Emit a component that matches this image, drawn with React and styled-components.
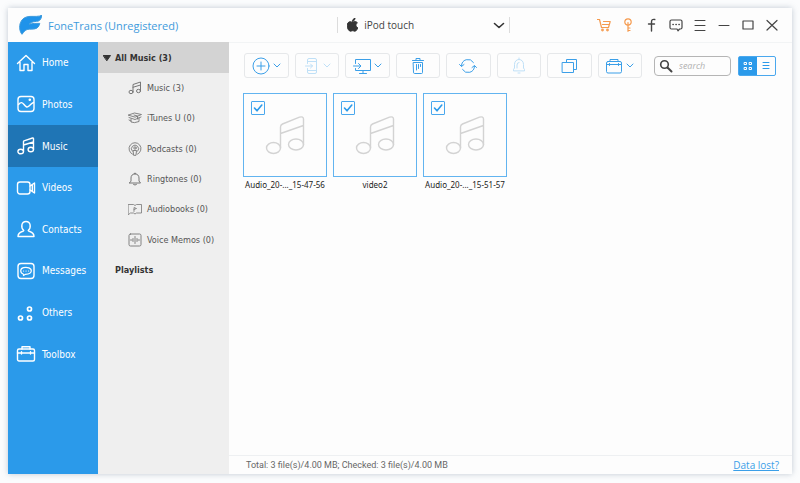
import React, { useState } from 'react';
import styled, { createGlobalStyle } from 'styled-components';

const GlobalStyle = createGlobalStyle`
    * {
        box-sizing: border-box;
    }
    body {
        margin: 0;
        background-color: #fbfcfd;
        font-family: 'Open Sans', 'Noto Sans', sans-serif;
    }
    button, input, select {
        font-family: inherit;
        margin: 0;
    }
    button {
        padding: 0;
        border: 0;
        background: none;
        cursor: pointer;
    }
`

function Icon({ w = 20, h = 20, stroke = 1.4, children, ...rest }) {
    return (
        <svg
            width={w}
            height={h}
            viewBox={`0 0 ${w} ${h}`}
            fill="none"
            stroke="currentColor"
            strokeWidth={stroke}
            strokeLinecap="round"
            strokeLinejoin="round"
            aria-hidden="true"
            {...rest}
        >
            {children}
        </svg>
    )
}

const LogoIcon = () => (
    <Icon w={23} h={20} fill="#1f93ea" stroke="none">
        <path d="M22.800 0.300C22.500 3 21.500 5.200 19.500 6C17 6.700 12.500 6.200 10.200 9.200C13 8.300 17 8.400 20.800 8.400C20 11.500 18.500 13.500 15.500 13.900C12 14.300 8.500 13.600 6.200 15.500C5 16.500 4.200 17.800 3 19.300C0.500 16.500 0 11.500 1.500 7.500C3.200 3.500 6.500 1.500 11 1.400C15 1.200 20 2 22.800 0.300Z" />
    </Icon>
)

const AppleIcon = () => (
    <Icon w={11} h={14} fill="currentColor" stroke="none">
        <path d="M7.800 0.500C7.900 2 6.800 3.300 5.400 3.400C5.200 2 6.400 0.700 7.800 0.500ZM5.500 4.300C6.200 4.300 7 3.600 8.100 3.600C9.200 3.700 9.900 4.100 10.400 4.800C8.300 6.100 8.600 8.800 10.800 9.700C10.200 11.300 9.200 13.200 7.900 13.200C7.100 13.200 6.700 12.700 5.700 12.700C4.700 12.700 4.300 13.200 3.500 13.200C1.800 13.200 0.200 10.200 0.200 7.700C0.200 5.200 1.600 3.700 3.200 3.700C4.200 3.700 4.900 4.300 5.500 4.300Z" />
    </Icon>
)

const HomeIcon = () => (
    <Icon>
        <path d="M1.500 10.500L10 2.500L18.500 10.500M4 9.500V17.500H8V11.500H12V17.500H16V9.500" />
    </Icon>
)
const PhotosIcon = () => (
    <Icon>
        <rect x="2" y="2.500" width="16" height="15" rx="3" />
        <path d="M2.500 10.500C5 7.500 6.500 8.500 8 10.500S11 14 13 12S16 9 17.500 8.500" />
        <circle cx="13.800" cy="5.800" r="0.600" />
    </Icon>
)
const MusicIcon = () => (
    <Icon>
        <path d="M7.500 15V5.500Q7.500 5 8 4.800L16.500 2Q17.500 1.800 17.500 2.800V13.300M7.500 9L17.500 6" />
        <ellipse cx="4.700" cy="15.500" rx="2.800" ry="2.300" />
        <ellipse cx="14.800" cy="13.500" rx="2.700" ry="2.300" />
    </Icon>
)
const VideosIcon = () => (
    <Icon>
        <rect x="1.500" y="4" width="12.500" height="12" rx="2.500" />
        <path d="M14 8L18.500 5V15L14 12M16.300 6.800V13.200" />
    </Icon>
)
const ContactsIcon = () => (
    <Icon>
        <path d="M7.800 11.500C4.500 8.500 5.300 2.500 10 2.500S15.500 8.500 12.200 11.500C12.200 13 18 12 18 17.500H2C2 12 7.800 13 7.800 11.500Z" />
    </Icon>
)
const MessagesIcon = () => (
    <Icon>
        <rect x="2" y="2.500" width="16" height="15" rx="3" />
        <path d="M7.500 13.200C3.800 12 3.800 7.500 7.500 6.600S15.500 7 15.300 10S11.500 13.200 9.500 13.300L7.500 14.500ZM7.500 10H7.600M10 10H10.100M12.500 10H12.600" strokeWidth="1.200" />
    </Icon>
)
const OthersIcon = () => (
    <Icon stroke={1.7}>
        <circle cx="13.500" cy="6" r="2" />
        <circle cx="4.500" cy="15" r="2" />
        <circle cx="13.500" cy="15" r="2" />
    </Icon>
)
const ToolboxIcon = () => (
    <Icon>
        <rect x="1.500" y="5" width="17" height="12" rx="1.500" />
        <path d="M6 5V2.800H14V5M1.500 9H18.500M5.500 7.800V10M14.500 7.800V10" />
    </Icon>
)

const ItunesIcon = () => (
    <Icon w={14} h={14} stroke={0.9}>
        <path d="M0.500 4L6.500 2L13.500 3.500L7.500 6ZM1 6.500L7 8.500L13 6M3 8V11Q6 12.500 11 10.500V7M6 4L9.500 5V8M1 9L3 10" />
    </Icon>
)
const NoteSmallIcon = () => (
    <Icon w={14} h={14} stroke={1}>
        <path d="M5 10.500V3.500L12.500 1V9.500M5 6.300L12.500 4" />
        <ellipse cx="3" cy="11" rx="2" ry="1.700" />
        <ellipse cx="10.500" cy="10" rx="2" ry="1.700" />
    </Icon>
)
const PodcastIcon = () => (
    <Icon w={14} h={14} stroke={0.9}>
        <path d="M4.500 12.200A6 6 0 1 1 9.500 12.200M4.300 9.200A3.600 3.600 0 1 1 9.700 9.200M5.500 8.500H8.500L8 13.300H6Z" />
        <circle cx="7" cy="6" r="1.200" />
    </Icon>
)
const BellIcon = () => (
    <Icon w={14} h={14} stroke={1}>
        <path d="M1.500 11H12.500L11 9V6C11 3.500 9.500 2 7 2S3 3.500 3 6V9ZM6 1.500Q7 0.300 8 1.500M5.500 12.500Q7 13.800 8.500 12.500" />
    </Icon>
)
const BookIcon = () => (
    <Icon w={14} h={14} stroke={0.8}>
        <path d="M0.500 2.500H5.500L7 3.500L8.500 2.500H13.500V11H8.500L7 12L5.500 11H2.500L0.500 12.500Z" />
        <path d="M6 9.500V5.500L8.500 6.500L6 7.500" />
    </Icon>
)
const MemoIcon = () => (
    <Icon w={14} h={14} stroke={0.9}>
        <rect x="1" y="1" width="12" height="12" rx="1.500" />
        <path d="M2.500 7H4M5 5.500V8.500M7 3.500V10.500M9 5.500V8.500M10 7H11.500" />
    </Icon>
)

const AddIcon = () => (
    <Icon w={18} h={18} stroke={1}>
        <circle cx="9" cy="9" r="8" />
        <path d="M9 5V13M5 9H13" />
    </Icon>
)
const ToDeviceIcon = () => (
    <Icon w={18} h={18} stroke={1}>
        <path d="M5.500 6.500V3Q5.500 1.500 7 1.500H13Q14.500 1.500 14.500 3V15Q14.500 16.500 13 16.500H7Q5.500 16.500 5.500 15V11.500M5.500 4.500H14.500M5.500 13.500H14.500M3.500 9H10.500M8.500 7L10.500 9L8.500 11" />
    </Icon>
)
const ToComputerIcon = () => (
    <Icon w={18} h={18} stroke={1}>
        <path d="M2.500 6.500V2.500H17.500V13.500H2.500V11.500M10 13.500V16M6.500 16.500H13.500M0.500 9H7.500M5.500 6.500L8 9L5.500 11.500" />
    </Icon>
)
const TrashIcon = () => (
    <Icon w={18} h={18} stroke={1}>
        <path d="M3.500 3.500H14.500M7 3V1.500H11V3M4.500 5.500H13.500V15.500Q13.500 16.500 12.500 16.500H5.500Q4.500 16.500 4.500 15.500ZM7.500 7.500V13M9.500 7.500V11.500M11.500 7.500V9.500" />
    </Icon>
)
const RefreshIcon = () => (
    <Icon w={18} h={18} stroke={1}>
        <path d="M2.500 9A6.500 6.500 0 0 1 14.500 5.500M15.500 9A6.500 6.500 0 0 1 3.500 12.500M0.500 7.500L2.500 9.500L5 7.500M13 10.500L15.500 8.500L17.500 10.500" />
    </Icon>
)
const BellSolidIcon = () => (
    <Icon w={18} h={18} stroke={1}>
        <path d="M3.500 13.500V12.500L4.500 11V7.500C4.500 4.500 6.500 2.500 9 2.500S13.500 4.500 13.500 7.500V11L14.500 12.500V13.500ZM9 1V2M8 16H10M7 11V8Q7 5.500 9 5.500" />
    </Icon>
)
const CopyIcon = () => (
    <Icon w={18} h={18} stroke={1}>
        <path d="M6.500 5V2.500H16.500V12.500H13.500" />
        <rect x="2.500" y="5.500" width="11" height="10" />
    </Icon>
)
const CaseIcon = () => (
    <Icon w={18} h={18} stroke={1}>
        <rect x="1.500" y="4.500" width="15" height="11.500" rx="1.500" />
        <path d="M5 4.500V2.500H13V4.500M1.500 7.500H16.500M4.500 6.500V8.500M13.500 6.500V8.500" />
    </Icon>
)
const CaretIcon = () => (
    <Icon w={8} h={5} stroke={1}>
        <path d="M1 1L4 4L7 1" />
    </Icon>
)

const CartIcon = () => (
    <Icon w={14} h={14} stroke={1.2}>
        <path d="M0.500 1.500H2.500L4.500 9.500H11.500L13.200 3.500H6.500M5.500 6.500H12" />
        <circle cx="5.500" cy="12" r="0.800" />
        <circle cx="10.500" cy="12" r="0.800" />
    </Icon>
)
const KeyIcon = () => (
    <Icon w={14} h={14} stroke={1.2}>
        <circle cx="7" cy="4" r="3.200" />
        <path d="M7 4.500V13.300M7 10H9M7 12.500H9" />
    </Icon>
)
const FacebookIcon = () => (
    <Icon w={14} h={14} stroke={1.4}>
        <path d="M9.800 1.500Q6.500 0.800 6.500 4V13M3.500 6H9.500" />
    </Icon>
)
const FeedbackIcon = () => (
    <Icon w={14} h={14} stroke={1.2}>
        <path d="M2.500 2H11.500Q13 2 13 3.500V9.500Q13 11 11.500 11H10.500L9 12.800L8 11H2.500Q1 11 1 9.500V3.500Q1 2 2.500 2Z" />
        <path d="M4 6.500H4.200M7 6.500H7.200M10 6.500H10.200" strokeWidth="1.600" />
    </Icon>
)
const MenuIcon = () => (
    <Icon w={14} h={14} stroke={1}>
        <path d="M2 2.500H12M2 7.500H12M2 12.500H12" />
    </Icon>
)
const MinimizeIcon = () => (
    <Icon w={14} h={14} stroke={1}>
        <path d="M2 7.500H12" />
    </Icon>
)
const MaximizeIcon = () => (
    <Icon w={14} h={14} stroke={1.2}>
        <rect x="2" y="3" width="10" height="8" />
    </Icon>
)
const CloseIcon = () => (
    <Icon w={14} h={14} stroke={1.2}>
        <path d="M2 2.500L12 12M12 2.500L2 12" />
    </Icon>
)
const SearchIcon = () => (
    <Icon w={14} h={14} stroke={1.600}>
        <circle cx="5.500" cy="5.500" r="3.800" />
        <path d="M8.500 8.500L12.500 12.500" strokeWidth="2" />
    </Icon>
)
const GridIcon = () => (
    <Icon w={10} h={10} stroke={1}>
        <path d="M1.500 1.500H3.500V3.500H1.500ZM6.500 1.500H8.500V3.500H6.500ZM1.500 6.500H3.500V8.500H1.500ZM6.500 6.500H8.500V8.500H6.500Z" />
    </Icon>
)
const ListIcon = () => (
    <Icon w={10} h={10} stroke={1}>
        <path d="M2 1.500H8M2 4.500H8M2 7.500H8" />
    </Icon>
)
const ExpandIcon = () => (
    <Icon w={8} h={6} fill="currentColor" stroke="none">
        <path d="M0.500 0.500H7.500L4 5.500Z" />
    </Icon>
)
const BigNoteIcon = () => (
    <Icon w={40} h={40} stroke={1.400}>
        <path d="M15.500 33V12Q15.500 10 17.500 9L34.500 2.200Q38.500 1 38.500 4V30M15.500 18.500L38.500 10.500" />
        <ellipse cx="8.500" cy="33" rx="7" ry="5.500" />
        <ellipse cx="31" cy="29.500" rx="7.500" ry="5.500" />
    </Icon>
)

const sections = [
    { name: 'Home', icon: <HomeIcon /> },
    { name: 'Photos', icon: <PhotosIcon /> },
    { name: 'Music', icon: <MusicIcon /> },
    { name: 'Videos', icon: <VideosIcon /> },
    { name: 'Contacts', icon: <ContactsIcon /> },
    { name: 'Messages', icon: <MessagesIcon /> },
    { name: 'Others', icon: <OthersIcon /> },
    { name: 'Toolbox', icon: <ToolboxIcon /> },
]

const categories = [
    { name: 'Music (3)', icon: <NoteSmallIcon /> },
    { name: 'iTunes U (0)', icon: <ItunesIcon /> },
    { name: 'Podcasts (0)', icon: <PodcastIcon /> },
    { name: 'Ringtones (0)', icon: <BellIcon /> },
    { name: 'Audiobooks (0)', icon: <BookIcon /> },
    { name: 'Voice Memos (0)', icon: <MemoIcon /> },
]

const tools = [
    { name: 'Add', icon: <AddIcon />, caret: true },
    { name: 'Export to device', icon: <ToDeviceIcon />, caret: true, disabled: true },
    { name: 'Export to computer', icon: <ToComputerIcon />, caret: true },
    { name: 'Delete', icon: <TrashIcon /> },
    { name: 'Refresh', icon: <RefreshIcon /> },
    { name: 'Ringtone maker', icon: <BellSolidIcon />, disabled: true },
    { name: 'Duplicates', icon: <CopyIcon /> },
    { name: 'More tools', icon: <CaseIcon />, caret: true },
]

const windowActions = [
    { name: 'Buy', icon: <CartIcon />, color: '#f59a4e' },
    { name: 'Register', icon: <KeyIcon />, color: '#f59a4e' },
    { name: 'Facebook', icon: <FacebookIcon /> },
    { name: 'Feedback', icon: <FeedbackIcon /> },
    { name: 'Menu', icon: <MenuIcon /> },
    { name: 'Minimize', icon: <MinimizeIcon /> },
    { name: 'Maximize', icon: <MaximizeIcon /> },
    { name: 'Close', icon: <CloseIcon /> },
]

const files = ['Audio_20-..._15-47-56', 'video2', 'Audio_20-..._15-51-57']

function TitleBar() {
    return (
        <Header>
            <Brand>
                <LogoIcon />
                FoneTrans (Unregistered)
            </Brand>

            <DeviceBox>
                <AppleIcon />
                <DeviceSelect aria-label="Device" defaultValue="ipod">
                    <option value="ipod">iPod touch</option>
                </DeviceSelect>
                <Icon w={12} h={8} stroke={1.6}>
                    <path d="M1.500 2.500L6 6.500L10.500 2.500" />
                </Icon>
            </DeviceBox>

            <WindowActions>
                {windowActions.map(a => (
                    <WindowButton key={a.name} aria-label={a.name} $color={a.color}>
                        {a.icon}
                    </WindowButton>
                ))}
            </WindowActions>
        </Header>
    )
}

function Toolbar() {
    return (
        <ToolbarRow>
            <ToolGroup>
                {tools.map(t => (
                    <ToolButton key={t.name} aria-label={t.name} disabled={t.disabled}>
                        {t.icon}
                        {t.caret && <CaretIcon />}
                    </ToolButton>
                ))}
            </ToolGroup>

            <SearchBox>
                <SearchIcon />
                <SearchInput type="text" placeholder="search" aria-label="search" />
            </SearchBox>

            <ViewSwitch>
                <ViewButton aria-label="Grid view" $active><GridIcon /></ViewButton>
                <ViewButton aria-label="List view"><ListIcon /></ViewButton>
            </ViewSwitch>
        </ToolbarRow>
    )
}

function FileCard({ name }) {
    const [checked, setChecked] = useState(true)
    return (
        <FileLabel>
            <Thumb>
                <BigNoteIcon />
                <CheckHolder>
                    <CheckInput
                        type="checkbox"
                        checked={checked}
                        onChange={e => setChecked(e.target.checked)}
                    />
                    {checked && (
                        <Icon w={14} h={14} stroke={1.600}>
                            <path d="M3.500 7L6 9.800L10.800 4" />
                        </Icon>
                    )}
                </CheckHolder>
            </Thumb>
            <FileName>{name}</FileName>
        </FileLabel>
    )
}

export default function App() {
    const [section, setSection] = useState('Music')

    return (
        <Page>
            <GlobalStyle />
            <Window>
                <TitleBar />
                <Body>
                    <SideNav>
                        <SideList>
                            {sections.map(s => (
                                <SideButton
                                    key={s.name}
                                    $active={s.name === section}
                                    onClick={() => setSection(s.name)}
                                >
                                    {s.icon}
                                    {s.name}
                                </SideButton>
                            ))}
                        </SideList>
                    </SideNav>

                    <TreePanel>
                        <TreeHeading>
                            <ExpandIcon />
                            All Music (3)
                        </TreeHeading>
                        <TreeList>
                            {categories.map(c => (
                                <TreeButton key={c.name}>
                                    {c.icon}
                                    {c.name}
                                </TreeButton>
                            ))}
                        </TreeList>
                        <PlaylistButton>Playlists</PlaylistButton>
                    </TreePanel>

                    <Content>
                        <Toolbar />
                        <FileGrid>
                            {files.map(f => <FileCard key={f} name={f} />)}
                        </FileGrid>
                        <StatusBar>
                            <StatusText>Total: 3 file(s)/4.00 MB; Checked: 3 file(s)/4.00 MB</StatusText>
                            <StatusLink href="#lost">Data lost?</StatusLink>
                        </StatusBar>
                    </Content>
                </Body>
            </Window>
        </Page>
    )
}

const Page = styled.div`
    min-height: 100vh;
    padding: 8px 8px 9px;
    display: flex;
`
const Window = styled.div`
    flex: 1;
    min-width: 0;
    display: flex;
    flex-direction: column;
    background-color: #fdfdfd;
    box-shadow: 0 0 6px rgba(110, 130, 150, 0.4);
`
const Header = styled.header`
    height: 34px;
    display: grid;
    grid-template-columns: 42% 22% 1fr;
    align-items: center;
`
const Brand = styled.div`
    padding-left: 11px;
    display: flex;
    align-items: center;
    gap: 6px;
    font-size: 11px;
    color: #3f9bdc;
    white-space: nowrap;
`
const DeviceBox = styled.div`
    height: 16px;
    padding: 0 4px 0 9px;
    display: flex;
    align-items: center;
    gap: 6px;
    border-left: 1px solid #dcdcdc;
    border-right: 1px solid #dcdcdc;
    color: #333;
`
const DeviceSelect = styled.select`
    flex: 1;
    min-width: 0;
    appearance: none;
    border: 0;
    padding: 0;
    background: none;
    font-size: 10px;
    color: #444;
`
const WindowActions = styled.div`
    padding-right: 8px;
    display: flex;
    justify-content: flex-end;
`
const WindowButton = styled.button`
    width: 24px;
    height: 24px;
    display: flex;
    align-items: center;
    justify-content: center;
    color: ${p => p.$color || '#444'};
`
const Body = styled.div`
    flex: 1;
    display: flex;
    font-family: 'DejaVu Sans Condensed', 'DejaVu Sans', sans-serif;
`
const SideNav = styled.nav`
    width: 90px;
    background-color: #2b9aea;
`
const SideList = styled.div`
    height: 333px;
    display: grid;
    grid-auto-rows: 1fr;
`
const SideButton = styled.button`
    padding-left: 8px;
    display: flex;
    align-items: center;
    gap: 6px;
    font-size: 10px;
    color: #fff;
    background-color: ${p => p.$active ? '#1f75b5' : 'transparent'};
`
const TreePanel = styled.aside`
    width: 131px;
    background-color: #efefef;
`
const TreeHeading = styled.button`
    width: 100%;
    height: 31px;
    padding-left: 5px;
    display: flex;
    align-items: center;
    gap: 4px;
    font-size: 9px;
    font-weight: 700;
    color: #333;
    background-color: #d3d3d3;
`
const TreeList = styled.div`
    height: 182px;
    display: grid;
    grid-auto-rows: 1fr;
`
const TreeButton = styled.button`
    padding-left: 30px;
    display: flex;
    align-items: center;
    gap: 5px;
    font-size: 9px;
    color: #555;
    white-space: nowrap;

    > svg {
        color: #777;
    }
`
const PlaylistButton = styled.button`
    height: 30px;
    padding-left: 17px;
    font-size: 9px;
    font-weight: 700;
    color: #333;
`
const Content = styled.main`
    flex: 1;
    min-width: 0;
    display: flex;
    flex-direction: column;
    border-top: 1px solid #f2f4f5;
`
const ToolbarRow = styled.div`
    padding: 10px 16px 0 15px;
    display: flex;
    align-items: center;
`
const ToolGroup = styled.div`
    flex: 0 1 398px;
    display: grid;
    grid-template-columns: repeat(8, 1fr);
    gap: 6px;
    margin-right: auto;
`
const ToolButton = styled.button`
    height: 25px;
    display: flex;
    align-items: center;
    justify-content: center;
    gap: 3px;
    border: 1px solid #e6e8ea;
    border-radius: 3px;
    color: #3b9fe8;

    &:disabled {
        color: #bfe0f7;
        cursor: default;
    }
`
const SearchBox = styled.div`
    width: 77px;
    height: 20px;
    padding-left: 4px;
    margin-right: 7px;
    display: flex;
    align-items: center;
    gap: 6px;
    border: 1px solid #b5b5b5;
    border-radius: 4px;
    color: #444;
`
const SearchInput = styled.input`
    flex: 1;
    min-width: 0;
    border: 0;
    padding: 0;
    outline: none;
    background: none;
    font-family: 'Open Sans', 'Noto Sans', sans-serif;
    font-size: 9px;
    font-style: italic;

    &::placeholder {
        color: #b0b0b0;
    }
`
const ViewSwitch = styled.div`
    width: 38px;
    height: 20px;
    display: flex;
    border: 1px solid #4aa8ee;
    border-radius: 2px;
`
const ViewButton = styled.button`
    flex: 1;
    display: flex;
    align-items: center;
    justify-content: center;
    color: ${p => p.$active ? '#fff' : '#2b9aea'};
    background-color: ${p => p.$active ? '#2b9aea' : 'transparent'};
`
const FileGrid = styled.div`
    flex: 1;
    padding: 15px 14px;
    display: flex;
    flex-wrap: wrap;
    align-content: flex-start;
    gap: 6px;
`
const FileLabel = styled.label`
    width: 84px;
    display: flex;
    flex-direction: column;
    align-items: center;
`
const Thumb = styled.span`
    width: 84px;
    height: 84px;
    position: relative;
    display: flex;
    align-items: center;
    justify-content: center;
    border: 1px solid #62b4f0;
    color: #d3d3d3;
`
const CheckHolder = styled.span`
    position: absolute;
    top: 7px;
    left: 7px;
    display: grid;
    color: #2b9aea;

    > * {
        grid-area: 1 / 1;
        pointer-events: none;
    }
`
const CheckInput = styled.input`
    width: 14px;
    height: 14px;
    appearance: none;
    border: 1px solid #4aa8ee;
    border-radius: 1px;
`
const FileName = styled.span`
    font-family: 'Noto Sans', 'Open Sans', sans-serif;
    font-size: 8px;
    line-height: 15px;
    color: #222;
    white-space: nowrap;
`
const StatusBar = styled.footer`
    height: 19px;
    padding: 0 13px 0 17px;
    display: flex;
    align-items: center;
    justify-content: space-between;
    border-top: 1px solid #eef0f2;
`
const StatusText = styled.span`
    font-family: Roboto, 'Open Sans', sans-serif;
    font-size: 9px;
    color: #666;
`
const StatusLink = styled.a`
    font-family: 'Open Sans', 'Noto Sans', sans-serif;
    font-size: 10px;
    color: #3b9fe8;
`
